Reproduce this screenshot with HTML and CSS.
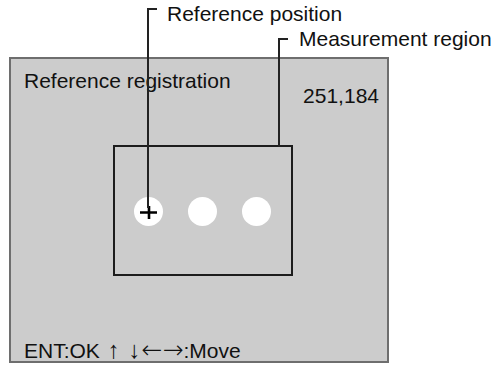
FILE: index.html
```html
<!DOCTYPE html>
<html lang="en">
<head>
    <meta charset="UTF-8">
    <title>Reference registration</title>
    <link rel="stylesheet" href="styles.css">
</head>
<body>
    <div class="figure">
        <!-- callouts -->
        <div class="leader leader-position"></div>
        <span class="label label-position">Reference position</span>
        <div class="leader leader-region"></div>
        <span class="label label-region">Measurement region</span>

        <div class="screen">
            <div class="screen-head">
                <span class="title">Reference registration</span>
                <span class="coords">251,184</span>
            </div>

            <div class="region">
                <div class="mark mark-ref">
                    <svg class="cross" width="19" height="15" viewBox="0 0 19 15">
                        <path d="M1 7.5H18M10 1V14" stroke="#000" stroke-width="2.6" fill="none"/>
                    </svg>
                </div>
                <div class="mark"></div>
                <div class="mark"></div>
            </div>

            <div class="keys">ENT:OK <span class="arrow-v">↑</span> <span class="arrow-v">↓</span><span class="arrow-h">←→</span>:Move</div>
        </div>
    </div>
</body>
</html>
```

FILE: styles.css
```css
body {
	margin: 0;
	font-family: "Liberation Sans", Arial, sans-serif;
	color: #111;
	background: #fff;
}

.figure {
	position: relative;
	width: 494px;
	height: 365px;
	padding: 57px 0 0 9px;
	box-sizing: border-box;
}

.screen {
	width: 380px;
	height: 306px;
	box-sizing: border-box;
	border: 2px solid #6e6e6e;
	background-color: #cccccc;
	display: flex;
	flex-direction: column;
	font-size: 21px;
	line-height: 21px;
}

.screen-head {
	display: flex;
	justify-content: space-between;
	align-items: flex-start;
	padding: 11px 8px 0 13px;
}

.coords {
	margin-top: 15px;
}

.region {
	width: 180px;
	height: 131px;
	box-sizing: border-box;
	margin: 39px 0 0 102px;
	border: 2px solid #1c1c1c;
	display: flex;
	align-items: center;
	gap: 25px;
	padding-left: 19px;
	padding-top: 1px;
}

.mark {
	width: 29px;
	height: 29px;
	border-radius: 50%;
	background-color: #fff;
	display: flex;
	align-items: center;
	justify-content: center;
}

.cross {
	display: block;
	margin: 2px 0 0 0;
}

.keys {
	margin-top: auto;
	padding-left: 13px;
	white-space: nowrap;
}

.arrow-v {
	font-size: 24px;
	line-height: 0;
	margin: 0 1px 0 2px;
}

.arrow-h {
	font-family: "DejaVu Sans", sans-serif;
	font-size: 25px;
	line-height: 0;
	font-weight: 200;
}

/* callout lines and labels */
.leader {
	position: absolute;
	border-left: 2px solid #222;
	border-top: 2px solid #222;
}

.leader-position {
	left: 147px;
	top: 8px;
	width: 8px;
	height: 198px;
}

.leader-region {
	left: 278px;
	top: 38px;
	width: 8px;
	height: 107px;
}

.label {
	position: absolute;
	font-size: 21px;
	line-height: 21px;
	white-space: nowrap;
}

.label-position {
	left: 167px;
	top: 3px;
}

.label-region {
	left: 299px;
	top: 28px;
}
```
